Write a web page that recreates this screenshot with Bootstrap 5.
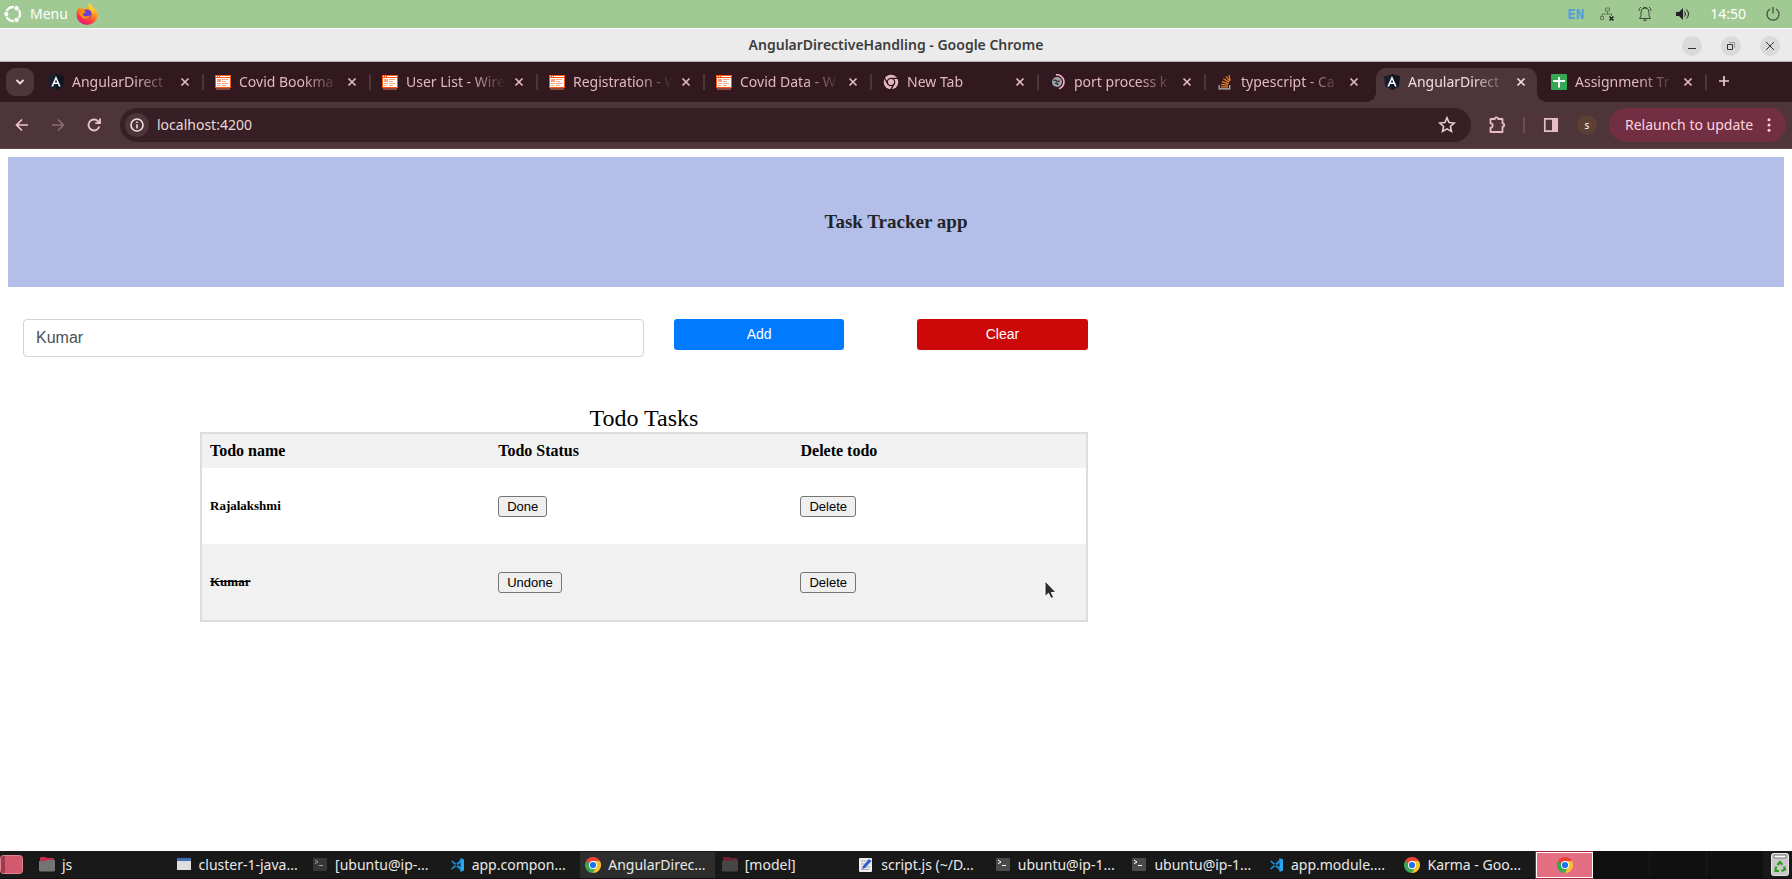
<!DOCTYPE html>
<html lang="en">
<head>
<meta charset="utf-8">
<meta name="viewport" content="width=device-width, initial-scale=1">
<title>AngularDirectiveHandling</title>
<link rel="stylesheet" href="https://cdn.jsdelivr.net/npm/bootstrap@5.3.0/dist/css/bootstrap.min.css">
<style>
  body { font: 14px/20px "Noto Sans", sans-serif; background: #fff; overflow-x: hidden; }
  button { border: 0; background: none; padding: 0; color: inherit; }
  svg { display: block; flex: none; }

  /* desktop panel */
  .sys-panel { height: 28px; background: #a0c994; color: #fff; padding: 0 12px 0 4px; }
  .sys-tray { color: #3c4a3a; }
  .clock { color: #fff; margin: 0 20px; }
  .lang-mark { font: bold 14px/20px "DejaVu Sans Mono", monospace; color: #4f9fd8; }

  /* window title */
  .win-title { height: 34px; background: #ebebeb; border-top: 1px solid #fafafa; border-bottom: 1px solid #b8b4b0; color: #3d3d3d; }
  .win-title .title-text { font-weight: 600; }
  .win-ctl { width: 20px; height: 20px; border-radius: 50%; background: #dadada; display: grid; place-items: center; }
  .win-ctls { right: 12px; top: 7px; gap: 19px; }

  /* tab strip */
  .tab-strip { height: 40px; background: #31191f; color: #e2b8c1; padding: 6px 6px 0; }
  .tab-search { width: 28px; height: 28px; border-radius: 9px; background: #4e3539; display: grid; place-items: center; margin-right: 3px; }
  .b-tab { flex: 0 1 167px; min-width: 0; height: 34px; padding: 0 14px 6px 11px; position: relative; }
  .b-tab::after { content: ""; position: absolute; right: 0; top: 6px; width: 2px; height: 16px; background: #4e3539; }
  .b-tab.no-sep::after { display: none; }
  .b-tab .tab-label { flex: 1; min-width: 0; margin: 0 4px 0 8px; overflow: hidden; white-space: nowrap;
    -webkit-mask-image: linear-gradient(to right, #000 62%, transparent 96%); mask-image: linear-gradient(to right, #000 62%, transparent 96%); }
  .b-tab.current { color: #f0dde1; background: #4e3539; border-radius: 10px 10px 0 0; margin: 0 3px; flex-basis: 161px; padding: 0 11px 6px 8px; }
  .b-tab.current::before, .b-tab.current::after { content: ""; display: block; position: absolute; width: 10px; height: 10px; top: auto; bottom: 0; background: none; }
  .b-tab.current::before { left: -10px; background: radial-gradient(circle at 0 0, transparent 10px, #4e3539 10px); }
  .b-tab.current::after { right: -10px; background: radial-gradient(circle at 100% 0, transparent 10px, #4e3539 10px); }

  /* toolbar */
  .tool-bar { height: 47px; background: #4e3539; color: #e6bcc5; padding: 0 6px 0 12px; border-bottom: 1px solid #5d4a4c; }
  .omni { height: 34px; border-radius: 17px; background: #381f25; margin-left: 16px; padding: 0 14px 0 5px; }
  .omni input { flex: 1; min-width: 0; border: 0; outline: 0; background: none; color: #e6d9db; padding: 0; margin-left: 8px; }
  .info-dot { width: 24px; height: 24px; border-radius: 50%; background: #4e3539; display: grid; place-items: center; }
  .v-rule { width: 2px; height: 16px; background: #6d4c53; }
  .user-dot { width: 20px; height: 20px; border-radius: 50%; background: #5c4035; color: #fff; font-size: 10px; line-height: 20px; text-align: center; }
  .relaunch { height: 34px; min-width: 177px; margin-left: 12px; border-radius: 17px; background: #722e42; color: #ffd3de; padding: 0 14px 0 16px; }

  /* page */
  .page { padding: 8px; font-family: "Liberation Serif", serif; color: #000; }
  .hero { height: 130px; background: #b3bee9; color: #212529; }
  .hero h3 { font-size: 19px; line-height: 22px; font-weight: bold; }
  .todo-form { width: calc(60% + 14px); padding-left: 15px; margin-top: 32px; font-family: "Liberation Sans", sans-serif; }
  .todo-form .form-control { border: 1px solid #ced4da; border-radius: 4px; color: #495057; height: 38px; font-size: 16px; }
  .todo-form .btn { flex: 0 0 16%; height: 31px; border-radius: 3px; font-size: 14px; line-height: 20px; color: #fff; padding: 0 0 1px; border: 0; }
  .btn-add { background: #007bff !important; margin-left: 30px; }
  .btn-wipe { background: #cc0809 !important; margin-left: 73px; }
  .todo-table { width: 50%; margin: 48px 0 0 192px; border: 2px solid #ddd; border-collapse: separate; border-spacing: 0; table-layout: fixed; }
  .todo-table caption { caption-side: top; text-align: center; color: #000; font-size: 24px; line-height: 27px; padding: 0; }
  .todo-table th, .todo-table td { padding: 8px; text-align: left; vertical-align: middle; }
  .todo-table th { font-size: 16px; line-height: 18px; }
  .todo-table td { height: 76px; }
  .todo-table thead tr, .todo-table tbody tr:nth-child(even) { background: #f1f1f1; }
  .todo-table h5 { font-size: 13px; line-height: 16px; font-weight: bold; margin: 0; }
  .todo-table button { font: 13px/15px "Liberation Sans", sans-serif; color: #000; background: #efefef; border: 1px solid #767676; border-radius: 3px; padding: 2px 8px; display: block; }
  .pointer { right: 28px; top: 36px; }

  /* task bar */
  .task-bar { height: 28px; background: #191919; color: #e9e9e9; border-bottom: 1px solid #101010; }
  .launcher { width: 34px; }
  .trash { padding: 0 3px 0 7px; }
  .task-item { flex: 1 1 0; min-width: 0; height: 26px; margin-right: 2px; padding-left: 5px; color: inherit; text-decoration: none; white-space: nowrap; overflow: hidden; }
  .task-item svg { margin-right: 7px; }
  .task-item.current { background: #2d2d2d; }
  .desk { width: 57px; height: 27px; background: #101010; border-right: 1px solid #191919; display: grid; place-items: center; }
  .desk.current { background: #e56f82; border: 1px solid #fff; box-shadow: 0 0 0 1px #9c2338; height: 26px; }
</style>
<script src="https://cdn.jsdelivr.net/npm/bootstrap@5.3.0/dist/js/bootstrap.bundle.min.js"></script>
</head>
<body class="min-vh-100 d-flex flex-column m-0">

<svg width="0" height="0" class="position-absolute" aria-hidden="true">
  <symbol id="i-angular" viewBox="0 0 16 16"><path d="M8 0l8 2.6-1.2 9.8L8 16l-6.800-3.600L0 2.600z" fill="#17202c"/><path d="M8 0l8 2.600-1.200 9.800L8 16z" fill="#0d1520"/><path d="M8 2L3.300 12.500h1.800l1-2.400h3.800l1 2.400h1.800zm0 3.400l1.300 3.200H6.700z" fill="#fff"/></symbol>
  <symbol id="i-wire" viewBox="0 0 16 15"><path d="M1 13h14v2H1z" fill="#8d4a3c"/><path d="M0 0h16v13H0z" fill="#fff"/><path d="M0 0h16v13H0zM1 3v9h14V3z" fill="#f9540f" fill-rule="evenodd"/><path d="M1 1h1v1H1zm2 0h1v1H3zm2 0h10v1H5z" fill="#fff"/><path d="M2 4h4v3H2zm5 0h6v1H7zm0 2h4v1H7zM2 8h4v1H2zm5 0h6v1H7zm-5 2h3v1H2zm5 0h4v1H7z" fill="#fba27c"/></symbol>
  <symbol id="i-close" viewBox="0 0 10 10"><path d="M1.500 1.500l7 7m0-7l-7 7" stroke="currentColor" stroke-width="1.700"/></symbol>
  <symbol id="i-chrome-mono" viewBox="0 0 16 16"><circle cx="8" cy="8" r="7.300" fill="#e2b8c1"/><g stroke="#31191f" stroke-width="1.300" fill="none"><circle cx="8" cy="8" r="3.700"/><path d="M8 4.300h7M4.800 9.900L1.300 3.800M11.200 9.900l-3.500 6"/></g></symbol>
  <symbol id="i-chrome" viewBox="0 0 16 16"><path d="M8 8L1.070 4A8 8 0 0 1 14.930 4z" fill="#ea4335"/><path d="M8 8L14.930 4A8 8 0 0 1 8 16z" fill="#fbc02d"/><path d="M8 8L8 16A8 8 0 0 1 1.070 4z" fill="#34a853"/><path d="M8 4h6.930L11 10z" fill="#fbc02d"/><path d="M4.540 10L1.070 4 8 4z" fill="#ea4335"/><path d="M11.460 10L8 16 5 10.800z" fill="#fbc02d"/><path d="M4.540 10L1.070 4 6 8 8 12l2 0-2 4z" fill="#34a853"/><circle cx="8" cy="8" r="4" fill="#fff"/><circle cx="8" cy="8" r="3.100" fill="#1a73e8"/></symbol>
  <symbol id="i-code" viewBox="0 0 16 16"><path d="M11.500 1L15 2.600v10.800L11.500 15z" fill="#2aa6f2"/><path d="M2 4.300l1.200-.8 9 7.200v3.200zM2 11.700l1.200.8 9-7.200V2.100z" fill="#1b8fdc"/></symbol>
  <symbol id="i-term" viewBox="0 0 14 13"><rect width="14" height="13" rx="1" fill="#4b4b4b"/><path d="M2 2l3 2-3 1.700" stroke="#fff" fill="none"/><path d="M6 7.500h4" stroke="#fff"/></symbol>
  <symbol id="i-folder" viewBox="0 0 16 15"><path d="M1 1q0-1 1-1h5l1 1h6q1 0 1 1v4H1z" fill="#c42b4c"/><path d="M0 4h7l1-1h7q1 0 1 1v9q0 1.500-1.500 1.500h-13Q0 14.500 0 13z" fill="#747474"/></symbol>
</svg>

<header>
  <div class="sys-panel d-flex align-items-center">
    <svg width="18" height="18" viewBox="0 0 18 18"><circle cx="9" cy="9" r="7" fill="none" stroke="#fff" stroke-width="2.300"/><g fill="#fff" stroke="#a0c994" stroke-width="1"><circle cx="2.300" cy="9" r="2.700"/><circle cx="12.600" cy="3.200" r="2.700"/><circle cx="12.600" cy="14.800" r="2.700"/></g></svg>
    <span class="ms-2">Menu</span>
    <svg class="ms-2" width="22" height="22" viewBox="0 0 22 22"><defs><linearGradient id="fx" x1=".8" y1="0" x2=".3" y2="1"><stop offset="0" stop-color="#fff44f"/><stop offset=".4" stop-color="#ff980e"/><stop offset=".75" stop-color="#ff3647"/><stop offset="1" stop-color="#e31587"/></linearGradient></defs><path d="M14 0c1 3 3 3.500 5 6 2 2.300 2.500 4 2.500 6A10.500 10 0 0 1 .5 12C.4 9 1.500 6 3.500 4L4 6l3-2 1 2 4-1c0-2 .5-4 2-5z" fill="url(#fx)"/><circle cx="11" cy="11" r="4.500" fill="#6a3fd8"/><path d="M3 8c2-2 5-1 7 1-1 1.500-3 1-3.500 2.500C8 14 12 14 14.500 12c-1 4-6 5-9 2-2-2-3-4-2.500-6z" fill="#ff8a16"/><path d="M13 3c4 1 6 5 4.500 9 0-3-2-5-4.500-6z" fill="#ffc933"/></svg>
    <div class="sys-tray ms-auto d-flex align-items-center">
      <span class="lang-mark">EN</span>
      <svg class="ms-3" width="14" height="14" viewBox="0 0 14 14" fill="none" stroke="#64785f"><path d="M5.500 1h4v3h-4zM.5 9.500h3v3h-3zM7.500 4v3M2 9.500V7h9.500v2"/><path d="M9.500 9.500l4 4m0-4l-4 4" stroke="#222" stroke-width="1.500"/></svg>
      <svg class="ms-4" width="14" height="16" viewBox="0 0 14 16" fill="none" stroke="currentColor"><path d="M1.500 12.500h11L11 10V6a4 4 0 0 0-8 0v4zM5.500 2.500v-1h3v1M1 5q0-3 2-4M13 5q0-3-2-4"/><path d="M5.500 13.500h3v1.500h-3z" fill="currentColor" stroke="none"/></svg>
      <svg class="ms-4" width="14" height="14" viewBox="0 0 14 14"><path d="M0 5h3l4-4v12L3 9H0z" fill="#222"/><path d="M8.500 4.500q2 2.500 0 5M10.500 2.500q4 4.500 0 9" fill="none" stroke="#222"/></svg>
      <span class="clock">14:50</span>
      <svg width="14" height="14" viewBox="0 0 14 14" fill="none" stroke="currentColor" stroke-width="1.200"><path d="M4 2a6 6 0 1 0 6 0M7 0v6.500"/></svg>
    </div>
  </div>

  <div class="win-title d-flex align-items-center justify-content-center position-relative">
    <span class="title-text">AngularDirectiveHandling - Google Chrome</span>
    <div class="win-ctls position-absolute d-flex">
      <button class="win-ctl" aria-label="Minimize"><svg width="10" height="10"><path d="M1 7.500h8" stroke="#333"/></svg></button>
      <button class="win-ctl" aria-label="Restore"><svg width="10" height="10" fill="none"><path d="M3 1.500h5.500V7" stroke="#999"/><path d="M1.500 3.500h5v5h-5z" stroke="#333"/></svg></button>
      <button class="win-ctl" aria-label="Close window"><svg width="10" height="10"><path d="M1 1l8 8m0-8l-8 8" stroke="#333"/></svg></button>
    </div>
  </div>

  <nav class="tab-strip d-flex" aria-label="Tabs">
    <button class="tab-search" aria-label="Search tabs"><svg width="10" height="8" viewBox="0 0 10 8"><path d="M1.500 2L5 5.500 8.500 2" fill="none" stroke="#f3dfe3" stroke-width="1.800"/></svg></button>
    <div class="b-tab d-flex align-items-center"><svg width="16" height="16"><use href="#i-angular"/></svg><span class="tab-label">AngularDirect</span><button aria-label="Close tab"><svg width="10" height="10"><use href="#i-close"/></svg></button></div>
    <div class="b-tab d-flex align-items-center"><svg width="16" height="15"><use href="#i-wire"/></svg><span class="tab-label">Covid Bookma</span><button aria-label="Close tab"><svg width="10" height="10"><use href="#i-close"/></svg></button></div>
    <div class="b-tab d-flex align-items-center"><svg width="16" height="15"><use href="#i-wire"/></svg><span class="tab-label">User List - Wire</span><button aria-label="Close tab"><svg width="10" height="10"><use href="#i-close"/></svg></button></div>
    <div class="b-tab d-flex align-items-center"><svg width="16" height="15"><use href="#i-wire"/></svg><span class="tab-label">Registration - W</span><button aria-label="Close tab"><svg width="10" height="10"><use href="#i-close"/></svg></button></div>
    <div class="b-tab d-flex align-items-center"><svg width="16" height="15"><use href="#i-wire"/></svg><span class="tab-label">Covid Data - W</span><button aria-label="Close tab"><svg width="10" height="10"><use href="#i-close"/></svg></button></div>
    <div class="b-tab d-flex align-items-center"><svg width="16" height="16"><use href="#i-chrome-mono"/></svg><span class="tab-label">New Tab</span><button aria-label="Close tab"><svg width="10" height="10"><use href="#i-close"/></svg></button></div>
    <div class="b-tab d-flex align-items-center"><svg width="16" height="16" viewBox="0 0 16 16"><circle cx="7" cy="8" r="5" fill="#9aa3ab"/><path d="M3.500 6.500q2-1 3 .5t3-.5M5 9.500q2-1 3 1.500" stroke="#31191f" stroke-width="1.300" fill="none"/><path d="M6 .8a7.200 7.200 0 0 1 3 14" fill="none" stroke="#ffb2c4" stroke-width="1.600"/></svg><span class="tab-label">port process k</span><button aria-label="Close tab"><svg width="10" height="10"><use href="#i-close"/></svg></button></div>
    <div class="b-tab no-sep d-flex align-items-center"><svg width="16" height="16" viewBox="0 0 16 16" fill="none" stroke-width="1.200"><path d="M2.200 11v3.800h10.500V11" stroke="#bcbbbb"/><path d="M4 12.800h7M4.200 10.300l6.900.8M4.900 7.600l6.600 2M6.400 4.800l5.700 3.400M8.900 2.400l4 4.800M12 1l1.200 5.600" stroke="#f48024"/></svg><span class="tab-label">typescript - Ca</span><button aria-label="Close tab"><svg width="10" height="10"><use href="#i-close"/></svg></button></div>
    <div class="b-tab current d-flex align-items-center"><svg width="16" height="16"><use href="#i-angular"/></svg><span class="tab-label">AngularDirect</span><button aria-label="Close tab"><svg width="10" height="10"><use href="#i-close"/></svg></button></div>
    <div class="b-tab d-flex align-items-center"><svg width="16" height="16" viewBox="0 0 16 16"><rect width="16" height="16" rx="1" fill="#34a853"/><path d="M2 6h12v2H2zM7 3h2v10.500H7z" fill="#fff"/></svg><span class="tab-label">Assignment Tr</span><button aria-label="Close tab"><svg width="10" height="10"><use href="#i-close"/></svg></button></div>
    <button class="ms-2 pb-2 px-1" aria-label="New tab"><svg width="10" height="10"><path d="M5 0v10M0 5h10" stroke="#e8ccd2" stroke-width="1.700"/></svg></button>
  </nav>

  <div class="tool-bar d-flex align-items-center">
    <button aria-label="Back"><svg width="20" height="20" viewBox="0 0 20 20" fill="none" stroke="#f0c5cf" stroke-width="1.700"><path d="M16 10H5M10 4.500L4.500 10l5.500 5.500"/></svg></button>
    <button class="ms-3" aria-label="Forward"><svg width="20" height="20" viewBox="0 0 20 20" fill="none" stroke="#8c6d73" stroke-width="1.700"><path d="M4 10h11M10 4.500l5.500 5.500-5.500 5.500"/></svg></button>
    <button class="ms-3" aria-label="Reload"><svg width="20" height="20" viewBox="0 0 20 20" fill="none" stroke="#f0c5cf" stroke-width="1.800"><path d="M15.300 11.500A5.500 5.500 0 1 1 14 6.200l1.500 1.500M16 3.500v4.700h-4.700"/></svg></button>
    <div class="omni flex-grow-1 d-flex align-items-center">
      <span class="info-dot"><svg width="14" height="14" viewBox="0 0 14 14"><circle cx="7" cy="7" r="6" fill="none" stroke="#f1dfe3" stroke-width="1.600"/><path d="M6.200 3.500h1.600v1.600H6.200zm0 2.700h1.600v4.300H6.200z" fill="#f1dfe3"/></svg></span>
      <input type="text" value="localhost:4200" aria-label="Address">
      <button aria-label="Bookmark"><svg width="20" height="20" viewBox="0 0 20 20"><path d="M10 2.800l2.100 4.700 5.100.500-3.800 3.500 1.100 5L10 13.900l-4.500 2.600 1.100-5L2.800 8l5.100-.5z" fill="none" stroke="#e0d0d3" stroke-width="1.600"/></svg></button>
    </div>
    <button class="ms-3" aria-label="Extensions"><svg width="20" height="20" viewBox="0 0 20 20" fill="none" stroke="currentColor" stroke-width="1.800" stroke-linejoin="round"><path d="M3.500 4h4.300a1.700 1.700 0 0 1 3.400 0H15.500v4.300a1.700 1.700 0 0 1 0 3.400V17h-12v-4.300a2 2 0 0 0 0-4.400z"/></svg></button>
    <span class="v-rule ms-3"></span>
    <button class="ms-3" aria-label="Side panel"><svg width="20" height="20" viewBox="0 0 20 20"><path d="M3.800 3.800h12.400v12.400H3.800z" fill="none" stroke="currentColor" stroke-width="1.700"/><path d="M11 3.500h5.500v13H11z" fill="currentColor"/></svg></button>
    <button class="user-dot ms-3" aria-label="Profile">s</button>
    <button class="relaunch d-flex align-items-center justify-content-between">Relaunch to update<svg width="6" height="14" viewBox="0 0 6 14" fill="currentColor"><circle cx="3" cy="1.700" r="1.500"/><circle cx="3" cy="7" r="1.500"/><circle cx="3" cy="12.300" r="1.500"/></svg></button>
  </div>
</header>

<main class="page flex-grow-1">
  <div class="hero d-flex align-items-center justify-content-center"><h3 class="m-0">Task Tracker app</h3></div>
  <form class="todo-form d-flex align-items-start" onsubmit="return false">
    <input class="form-control" type="text" value="Kumar" aria-label="Todo name">
    <button class="btn btn-add" type="submit">Add</button>
    <button class="btn btn-wipe" type="reset">Clear</button>
  </form>
  <table class="todo-table">
    <caption>Todo Tasks</caption>
    <colgroup><col style="width:32.600%"><col style="width:34.200%"><col style="width:33.200%"></colgroup>
    <thead><tr><th scope="col">Todo name</th><th scope="col">Todo Status</th><th scope="col">Delete todo</th></tr></thead>
    <tbody>
      <tr><td><h5>Rajalakshmi</h5></td><td><button type="button">Done</button></td><td><button type="button">Delete</button></td></tr>
      <tr><td><h5><s>Kumar</s></h5></td><td><button type="button">Undone</button></td><td class="position-relative"><button type="button">Delete</button>
        <svg class="pointer position-absolute" width="14" height="20" viewBox="0 0 14 20"><path d="M1 1v15.500l3.500-3.200L7 18.500l2.700-1.200-2.400-4.800H12z" fill="#2b2b2b" stroke="#fff"/></svg></td></tr>
    </tbody>
  </table>
</main>

<footer class="task-bar d-flex align-items-center">
  <button class="launcher" aria-label="Show desktop"><svg width="23" height="20"><rect x=".5" y=".5" width="22" height="18" rx="3" fill="#d3596c" stroke="#e08592"/><path d="M1 3q0-2 2-2h2v17H3q-2 0-2-2z" fill="#a33a4c"/></svg></button>
  <a href="#" class="task-item d-flex align-items-center"><svg width="16" height="15"><use href="#i-folder"/></svg>js</a>
  <a href="#" class="task-item d-flex align-items-center"><svg width="16" height="13"><path d="M1 0h14v12H1z" fill="#dedede"/><path d="M1 0h14v3H1z" fill="#3d6fb5"/></svg>cluster-1-java...</a>
  <a href="#" class="task-item d-flex align-items-center"><svg width="16" height="13" opacity=".6"><use href="#i-term"/></svg>[ubuntu@ip-...</a>
  <a href="#" class="task-item d-flex align-items-center"><svg width="16" height="16"><use href="#i-code"/></svg>app.compon...</a>
  <a href="#" class="task-item current d-flex align-items-center"><svg width="16" height="16"><use href="#i-chrome"/></svg>AngularDirec...</a>
  <a href="#" class="task-item d-flex align-items-center"><svg width="16" height="15" opacity=".5"><use href="#i-folder"/></svg>[model]</a>
  <a href="#" class="task-item d-flex align-items-center"><svg width="16" height="16"><rect x="1" y="1" width="13" height="14" rx="1" fill="#eee"/><path d="M3 4h9M3 7h6M3 10h9M3 12.500h8" stroke="#aaa"/><path d="M4 12l1-3 6-7 2.500 2L7 11z" fill="#2c5fd0"/></svg>script.js (~/D...</a>
  <a href="#" class="task-item d-flex align-items-center"><svg width="16" height="13"><use href="#i-term"/></svg>ubuntu@ip-1...</a>
  <a href="#" class="task-item d-flex align-items-center"><svg width="16" height="13"><use href="#i-term"/></svg>ubuntu@ip-1...</a>
  <a href="#" class="task-item d-flex align-items-center"><svg width="16" height="16"><use href="#i-code"/></svg>app.module....</a>
  <a href="#" class="task-item d-flex align-items-center"><svg width="16" height="16"><use href="#i-chrome"/></svg>Karma - Goo...</a>
  <button class="desk current" aria-label="Workspace 1"><svg width="16" height="16"><use href="#i-chrome"/></svg></button>
  <button class="desk" aria-label="Workspace 2"></button>
  <button class="desk" aria-label="Workspace 3"></button>
  <button class="desk" aria-label="Workspace 4"></button>
  <button class="trash" aria-label="Trash"><svg width="18" height="23" viewBox="0 0 18 23"><rect x=".5" y=".5" width="17" height="22" rx="2" fill="#c9c9c9" stroke="#e6e6e6"/><path d="M3 2h12v3H3z" fill="#fff" stroke="#777"/><g fill="none" stroke="#2b9a22" stroke-width="2.200"><path d="M6.500 12L9 9l2.300 2.800M13 13.500l1 3-3.500 1.500M8 18H4.500L5 13.500"/></g></svg></button>
</footer>
</body>
</html>
